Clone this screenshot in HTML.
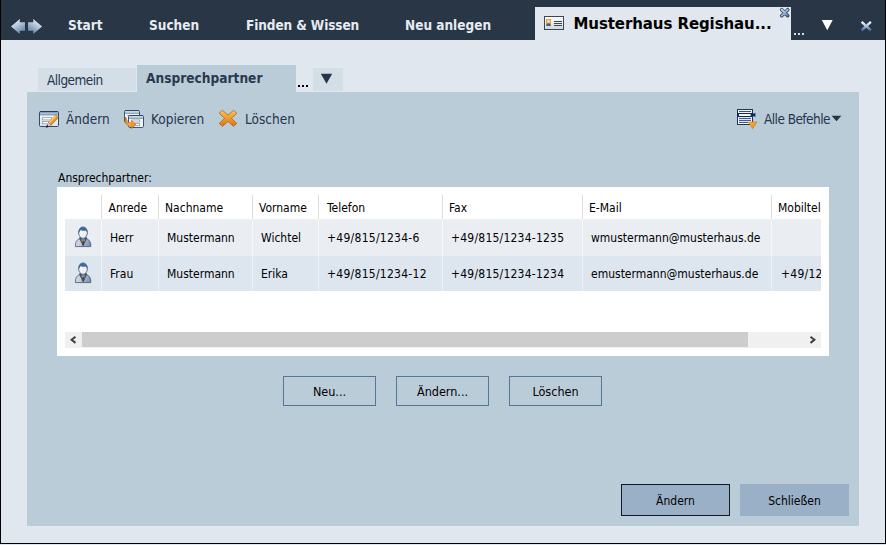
<!DOCTYPE html>
<html lang="de">
<head>
<meta charset="utf-8">
<title>Musterhaus Regishaus - Ansprechpartner</title>
<style>
html,body{margin:0;padding:0;}
body{width:886px;height:545px;overflow:hidden;background:#e0e7ee;position:relative;
 font-family:"DejaVu Sans Condensed","Liberation Sans",sans-serif;font-size:12px;color:#000;}
.abs{position:absolute;}
#frame{position:absolute;left:0;top:0;width:884px;height:543px;border-left:1px solid #000;border-right:1px solid #000;border-bottom:1px solid #000;pointer-events:none;z-index:50;}
#topbar{position:absolute;left:0;top:0;width:886px;height:40px;background:#293646;}
.nav{position:absolute;top:16px;height:18px;line-height:18px;font-family:"DejaVu Sans Condensed","Liberation Sans",sans-serif;font-weight:bold;font-size:13.5px;color:#e6ebf2;white-space:nowrap;}
#toptab{position:absolute;left:535px;top:7px;width:256px;height:33px;background:#e0e7ee;}
#toptab .ttl{position:absolute;left:38.5px;top:7px;line-height:20px;font-family:"DejaVu Sans","Liberation Sans",sans-serif;font-weight:bold;font-size:15px;letter-spacing:-0.09px;color:#000;white-space:nowrap;}
.tab1{position:absolute;left:38px;top:68px;width:98px;height:23px;background:#d3dee7;}
.tab1 span{position:absolute;left:9px;top:4px;line-height:16px;font-size:13.5px;letter-spacing:-0.55px;color:#24354c;}
.tab2{position:absolute;left:137px;top:65px;width:159px;height:28px;background:#bbccd9;}
.tab2 span{position:absolute;left:9px;top:4px;line-height:18px;font-weight:bold;font-size:13.6px;color:#2a3950;white-space:nowrap;}
.tabdd{position:absolute;left:313px;top:68px;width:30px;height:23px;background:#d3dee7;}
#panel{position:absolute;left:27px;top:92px;width:832px;height:434px;background:#bbccd9;}
.tb{position:absolute;top:111px;line-height:16px;font-size:13.5px;color:#24354c;white-space:nowrap;}
#grid{position:absolute;left:57px;top:187px;width:772px;height:169px;background:#fff;}
.hd{position:absolute;top:13px;line-height:16px;white-space:nowrap;}
.row{position:absolute;left:8px;width:756px;height:36px;overflow:hidden;}
.row span{position:absolute;top:11px;line-height:16px;white-space:nowrap;}
.r2 span{top:10px;}
.sep{position:absolute;top:8px;width:1px;height:24px;background:#dedede;}
.rsep{position:absolute;top:32px;width:1px;height:72px;background:rgba(255,255,255,0.5);}
.btn{position:absolute;box-sizing:border-box;height:30px;border:1px solid #53779a;text-align:center;line-height:30px;font-size:12.5px;top:376px;width:93px;}
</style>
</head>
<body>
<div id="topbar"></div>
<div class="nav" style="left:68px">Start</div>
<div class="nav" style="left:149px">Suchen</div>
<div class="nav" style="left:246px;letter-spacing:-0.1px">Finden &amp; Wissen</div>
<div class="nav" style="left:405px">Neu anlegen</div>
<div id="toptab"><div class="ttl">Musterhaus Regishau...</div></div>

<div class="tab1"><span>Allgemein</span></div>
<div class="tab2"><span>Ansprechpartner</span></div>
<div class="tabdd"></div>
<div id="panel"></div>

<div class="tb" style="left:66px">Ändern</div>
<div class="tb" style="left:151px">Kopieren</div>
<div class="tb" style="left:245px">Löschen</div>
<div class="tb" style="left:764px;letter-spacing:-0.55px">Alle Befehle</div>

<div class="abs" style="left:58px;top:170px;line-height:16px;">Ansprechpartner:</div>
<div id="grid">
  <div class="row" style="top:32px;height:37px;background:#eaeef3;">
    <span style="left:45px">Herr</span><span style="left:102px">Mustermann</span><span style="left:196px">Wichtel</span><span style="left:262px;letter-spacing:0.27px">+49/815/1234-6</span><span style="left:386px;letter-spacing:0.22px">+49/815/1234-1235</span><span style="left:526px">wmustermann@musterhaus.de</span>
  </div>
  <div class="row r2" style="top:69px;height:35px;background:#dde5ee;">
    <span style="left:45px">Frau</span><span style="left:102px">Mustermann</span><span style="left:196px">Erika</span><span style="left:262px;letter-spacing:0.27px">+49/815/1234-12</span><span style="left:386px;letter-spacing:0.22px">+49/815/1234-1234</span><span style="left:526px">emustermann@musterhaus.de</span><span style="left:716px;letter-spacing:0.25px">+49/1234567</span>
  </div>
  <div class="hd" style="left:51.5px">Anrede</div>
  <div class="hd" style="left:108px">Nachname</div>
  <div class="hd" style="left:202px">Vorname</div>
  <div class="hd" style="left:270px">Telefon</div>
  <div class="hd" style="left:392px">Fax</div>
  <div class="hd" style="left:532px">E-Mail</div>
  <div class="hd" style="left:721px;width:43px;overflow:hidden;">Mobiltelefon</div>
  <div class="sep" style="left:44px"></div><div class="sep" style="left:101px"></div><div class="sep" style="left:195px"></div><div class="sep" style="left:261px"></div><div class="sep" style="left:385px"></div><div class="sep" style="left:525px"></div><div class="sep" style="left:714px"></div>
  <div class="rsep" style="left:44px"></div><div class="rsep" style="left:101px"></div><div class="rsep" style="left:195px"></div><div class="rsep" style="left:261px"></div><div class="rsep" style="left:385px"></div><div class="rsep" style="left:525px"></div><div class="rsep" style="left:714px"></div>
  <div class="abs" style="left:8px;top:145px;width:756px;height:16px;background:#f0f0f0;"></div>
  <div class="abs" style="left:25px;top:145px;width:666px;height:15px;background:#cdcdcd;"></div>
</div>

<div class="btn" style="left:283px">Neu...</div>
<div class="btn" style="left:396px">Ändern...</div>
<div class="btn" style="left:509px">Löschen</div>

<div class="abs" style="left:621px;top:484px;width:109px;height:32px;box-sizing:border-box;border:1px solid #111a24;background:#9ab0c6;text-align:center;line-height:32px;">Ändern</div>
<div class="abs" style="left:740px;top:484px;width:109px;height:32px;background:#9ab0c6;text-align:center;line-height:34px;">Schließen</div>


<!-- nav arrows -->
<svg class="abs" style="left:9px;top:17px" width="36" height="19" viewBox="0 0 36 19">
 <defs>
  <linearGradient id="ga" x1="0" y1="0" x2="0.6" y2="1"><stop offset="0" stop-color="#ffffff"/><stop offset="0.45" stop-color="#c3cfe0"/><stop offset="1" stop-color="#6786ad"/></linearGradient>
  <linearGradient id="gb" x1="1" y1="0" x2="0.4" y2="1"><stop offset="0" stop-color="#ffffff"/><stop offset="0.45" stop-color="#c3cfe0"/><stop offset="1" stop-color="#6786ad"/></linearGradient>
 </defs>
 <path d="M2 9.4 L10.8 1.9 L10.8 5.2 L16 5.2 L16 13.7 L10.8 13.7 L10.8 16.9 Z" fill="url(#ga)"/>
 <path d="M33.1 9.4 L24.3 1.9 L24.3 5.2 L19 5.2 L19 13.7 L24.3 13.7 L24.3 16.9 Z" fill="url(#gb)"/>
</svg>

<!-- card icon in top tab -->
<svg class="abs" style="left:544px;top:16px" width="20" height="14" viewBox="0 0 20 14">
 <defs><linearGradient id="gc" x1="0" y1="0" x2="0" y2="1"><stop offset="0" stop-color="#ffffff"/><stop offset="1" stop-color="#cdd5de"/></linearGradient></defs>
 <rect x="0.5" y="0.5" width="19" height="13" fill="url(#gc)" stroke="#3b4759"/>
 <rect x="2" y="3" width="5" height="7" fill="#f2a12a"/>
 <circle cx="4.5" cy="5.4" r="1.3" fill="#dfe9f5"/>
 <path d="M2.3 10 Q2.3 7.2 4.5 7.2 Q6.7 7.2 6.7 10 Z" fill="#3c5f8e"/>
 <rect x="10" y="5" width="8" height="1" fill="#3b4759"/><rect x="10" y="7" width="8" height="1" fill="#3b4759"/><rect x="10" y="9" width="8" height="1" fill="#3b4759"/>
</svg>

<!-- tab close small x -->
<svg class="abs" style="left:779px;top:7px" width="12" height="12" viewBox="0 0 12 12">
 <path d="M2.7 2.7 L8.7 8.7 M8.7 2.7 L2.7 8.7" stroke="#3a4c66" stroke-width="3.6" stroke-linecap="round"/>
 <defs><linearGradient id="gsx" gradientUnits="userSpaceOnUse" x1="2" y1="2" x2="9" y2="10"><stop offset="0" stop-color="#d3deec"/><stop offset="0.5" stop-color="#9bb3d1"/><stop offset="1" stop-color="#3f6aa2"/></linearGradient></defs>
 <path d="M2.8 2.8 L8.6 8.6 M8.6 2.8 L2.8 8.6" stroke="url(#gsx)" stroke-width="2" stroke-linecap="round"/>
</svg>

<!-- top bar right: dots, dropdown, close -->
<div class="abs" style="left:794px;top:32.5px;width:2.4px;height:2.4px;background:#d8dfe8;box-shadow:4px 0 0 #d8dfe8,8px 0 0 #d8dfe8;"></div>
<svg class="abs" style="left:821px;top:19px" width="13" height="12" viewBox="0 0 13 12"><path d="M0.8 1 L11.7 1 L6.25 11.2 Z" fill="#ffffff"/></svg>
<svg class="abs" style="left:859px;top:19px" width="14" height="14" viewBox="0 0 14 14">
 <defs><linearGradient id="gx" x1="0" y1="0" x2="0" y2="1"><stop offset="0" stop-color="#f4f7fb"/><stop offset="0.45" stop-color="#bccadd"/><stop offset="1" stop-color="#3c659c"/></linearGradient></defs>
 <path d="M2.6 2.8 L11.9 11.5 M11.9 2.8 L2.6 11.5" stroke="url(#gx)" stroke-width="2.4" stroke-linecap="butt"/>
</svg>

<!-- sub tab dots + dropdown -->
<div class="abs" style="left:298px;top:85px;width:2px;height:2px;background:#000;box-shadow:4px 0 0 #000,8px 0 0 #000;"></div>
<svg class="abs" style="left:320px;top:73px" width="13" height="12" viewBox="0 0 13 12"><path d="M0.8 0.7 L12.2 0.7 L6.5 10.8 Z" fill="#26354a"/></svg>

<!-- toolbar: edit icon -->
<svg class="abs" style="left:39px;top:110px" width="21" height="19" viewBox="0 0 21 19">
 <defs>
  <linearGradient id="gw" x1="0" y1="0" x2="0" y2="1"><stop offset="0" stop-color="#ffffff"/><stop offset="1" stop-color="#dfdfee"/></linearGradient>
  <linearGradient id="gp" gradientUnits="userSpaceOnUse" x1="12" y1="8" x2="16" y2="12"><stop offset="0" stop-color="#ffd27a"/><stop offset="0.4" stop-color="#f9a825"/><stop offset="1" stop-color="#e9820c"/></linearGradient>
 </defs>
 <rect x="0.5" y="1.5" width="19" height="15" rx="1.2" fill="url(#gw)" stroke="#2c4a72"/>
 <rect x="1" y="2" width="18" height="2.6" fill="#a9bdd6"/>
 <rect x="1" y="1.2" width="18" height="1" fill="#223a5c"/>
 <rect x="1" y="4.5" width="18" height="0.8" fill="#4d729d"/>
 <rect x="3.5" y="7.6" width="9" height="2.3" fill="#ffffff" stroke="#9b9b9f" stroke-width="0.8"/>
 <rect x="3.5" y="11.5" width="6.5" height="2.3" fill="#ffffff" stroke="#9b9b9f" stroke-width="0.8"/>
 <path d="M16.62 4.99 L19.38 7.61 L12.18 15.21 L9.42 12.59 Z" fill="url(#gp)" stroke="#8a5a1c" stroke-width="0.5"/>
 <path d="M16.5 6 L10.2 12.6" stroke="#fff0c8" stroke-width="0.9" fill="none"/>
 <path d="M12.18 15.21 L9.42 12.59 L7.7 17 Z" fill="#d9d9de" stroke="#6a6a70" stroke-width="0.4"/>
 <path d="M9.9 16.5 L8.1 14.8 L6.9 17.9 Z" fill="#141414"/>
</svg>

<!-- toolbar: copy icon -->
<svg class="abs" style="left:124px;top:109px" width="21" height="21" viewBox="0 0 21 21">
 <defs><linearGradient id="gar" gradientUnits="userSpaceOnUse" x1="1" y1="7" x2="11" y2="17"><stop offset="0" stop-color="#6e3a12"/><stop offset="0.3" stop-color="#ee9420"/><stop offset="0.7" stop-color="#f9a72c"/><stop offset="1" stop-color="#ea8410"/></linearGradient></defs>
 <rect x="0.5" y="1.5" width="15" height="12" rx="1.2" fill="#f6f6fb" stroke="#34557f"/>
 <rect x="1" y="1.2" width="14" height="1" fill="#2a476e"/>
 <rect x="1" y="2.2" width="14" height="1.6" fill="#cbd7e6"/>
 <rect x="1" y="3.8" width="14" height="0.8" fill="#4d729d"/>
 <rect x="3.4" y="6" width="8" height="1" fill="#9b9b9f"/>
 <rect x="4.5" y="6.5" width="15" height="12" rx="1.2" fill="#f1f0f8" stroke="#34557f"/>
 <rect x="5" y="6.2" width="14" height="1" fill="#2a476e"/>
 <rect x="5" y="7.2" width="14" height="1.6" fill="#cbd7e6"/>
 <rect x="5" y="8.8" width="14" height="0.8" fill="#4d729d"/>
 <rect x="8" y="11" width="7.6" height="2" fill="#ffffff" stroke="#9b9b9f" stroke-width="0.8"/>
 <rect x="8" y="14.6" width="7.6" height="2" fill="#ffffff" stroke="#9b9b9f" stroke-width="0.8"/>
 <path d="M0.5 7.2 Q2.2 8.6 2.6 10.4 Q3.6 14.2 7.4 14.2 L7.4 11.6 L11.8 15.4 L7.2 19.7 L7.3 17.5 Q0.6 17.8 0.5 7.2 Z" fill="url(#gar)" stroke="#9c5a14" stroke-width="0.5"/>
</svg>

<!-- toolbar: delete icon -->
<svg class="abs" style="left:218px;top:109px" width="20" height="19" viewBox="0 0 20 19">
 <defs><linearGradient id="gd" x1="0" y1="0" x2="0" y2="1"><stop offset="0" stop-color="#fbc565"/><stop offset="0.5" stop-color="#f29a28"/><stop offset="1" stop-color="#de7708"/></linearGradient></defs>
 <path d="M4.4 1.2 L10 6.2 L15.6 1.2 L18.8 4.2 L13.4 9.3 L18.8 14.4 L15.6 17.4 L10 12.4 L4.4 17.4 L1.2 14.4 L6.6 9.3 L1.2 4.2 Z" fill="url(#gd)" stroke="#a9651a" stroke-width="0.8" stroke-linejoin="round"/>
</svg>

<!-- toolbar: all commands icon -->
<svg class="abs" style="left:736px;top:108px" width="22" height="22" viewBox="0 0 22 22">
 <defs><linearGradient id="go" x1="0" y1="0" x2="1" y2="1"><stop offset="0" stop-color="#f7b13a"/><stop offset="1" stop-color="#e98a10"/></linearGradient></defs>
 <rect x="1.5" y="1.5" width="15" height="15" fill="#f3f3fa" stroke="#2a3448"/>
 <rect x="3" y="3" width="12" height="1" fill="#2f5288"/>
 <rect x="1" y="5" width="16" height="4" fill="#0b2a66"/>
 <path d="M17 5.6 L18 5.6 L19.4 4.8 L19.4 9 L18 8.2 L17 8.2 Z" fill="#0b2a66"/>
 <rect x="3" y="6" width="11.6" height="2" fill="#f6f4fb"/>
 <rect x="3" y="9.9" width="12" height="1" fill="#2f5288"/>
 <rect x="3" y="11.9" width="12" height="1" fill="#2f5288"/>
 <rect x="3" y="13.9" width="9.5" height="1" fill="#2f5288"/>
 <path d="M12.2 14 L21 14 L16.6 20.8 Z" fill="url(#go)" stroke="#b6791f" stroke-width="0.5"/>
</svg>
<svg class="abs" style="left:831px;top:115px" width="11" height="7" viewBox="0 0 11 7"><path d="M0.6 0.8 L10.4 0.8 L5.5 6.2 Z" fill="#26354a"/></svg>

<svg class="abs" width="0" height="0" style="left:0;top:0"><defs>
 <linearGradient id="gbody" x1="0" y1="0" x2="1" y2="0.4"><stop offset="0" stop-color="#dfe2ee"/><stop offset="0.5" stop-color="#c4cbde"/><stop offset="1" stop-color="#7d98bc"/></linearGradient>
 <linearGradient id="gface" x1="0" y1="0" x2="1" y2="1"><stop offset="0" stop-color="#ffffff"/><stop offset="1" stop-color="#dfe6f0"/></linearGradient>
</defs></svg>
<svg class="abs" style="left:74px;top:226px" width="18" height="22" viewBox="0 0 18 22">
 <path d="M1.4 20.6 Q1 14.4 5.6 12.6 L7 10.6 L11.2 10.6 L12.6 12.6 Q17.2 14.4 16.8 20.6 Z" fill="url(#gbody)" stroke="#3f4656" stroke-width="0.7"/>
 <path d="M5 12.2 L9.2 20.6 L13.2 12.2 L11.8 10.4 L9.2 13.4 L6.4 10.4 Z" fill="#2c5a92"/>
 <path d="M7.4 13.4 L11 13.4 L10.4 15.4 L9.2 16 L8 15.4 Z" fill="#f39a1f"/>
 <path d="M8.7 14.4 L9.7 14.4 L9.9 18.6 L9.2 20 L8.5 18.6 Z" fill="#5a3a18"/>
 <ellipse cx="9" cy="6.6" rx="4.4" ry="5.7" fill="url(#gface)" stroke="#3f4a5e" stroke-width="0.7"/>
 <path d="M4.7 8.4 Q3.6 1 9 0.9 Q14.4 1 13.3 8.4 Q13 5.4 11.8 4.4 Q9.2 5.4 6.8 3.9 Q5.4 5 4.7 8.4 Z" fill="#3b6a9e"/>
</svg>
<svg class="abs" style="left:74px;top:262px" width="18" height="22" viewBox="0 0 18 22">
 <path d="M1.4 20.6 Q1 14.4 5.6 12.6 L7 10.6 L11.2 10.6 L12.6 12.6 Q17.2 14.4 16.8 20.6 Z" fill="url(#gbody)" stroke="#3f4656" stroke-width="0.7"/>
 <path d="M5 12.2 L9.2 20.6 L13.2 12.2 L11.8 10.4 L9.2 13.4 L6.4 10.4 Z" fill="#2c5a92"/>
 <path d="M7.4 13.4 L11 13.4 L10.4 15.4 L9.2 16 L8 15.4 Z" fill="#f39a1f"/>
 <path d="M8.7 14.4 L9.7 14.4 L9.9 18.6 L9.2 20 L8.5 18.6 Z" fill="#5a3a18"/>
 <ellipse cx="9" cy="6.6" rx="4.4" ry="5.7" fill="url(#gface)" stroke="#3f4a5e" stroke-width="0.7"/>
 <path d="M4.7 8.4 Q3.6 1 9 0.9 Q14.4 1 13.3 8.4 Q13 5.4 11.8 4.4 Q9.2 5.4 6.8 3.9 Q5.4 5 4.7 8.4 Z" fill="#3b6a9e"/>
</svg>
<!-- scrollbar chevrons -->
<svg class="abs" style="left:69px;top:335px" width="9" height="10" viewBox="0 0 9 10"><path d="M6.5 1.7 L2.6 4.8 L6.5 7.9" fill="none" stroke="#404040" stroke-width="2"/></svg>
<svg class="abs" style="left:808px;top:335px" width="9" height="10" viewBox="0 0 9 10"><path d="M2.5 1.7 L6.4 4.8 L2.5 7.9" fill="none" stroke="#404040" stroke-width="2"/></svg>

<div id="frame"></div>
</body>
</html>
